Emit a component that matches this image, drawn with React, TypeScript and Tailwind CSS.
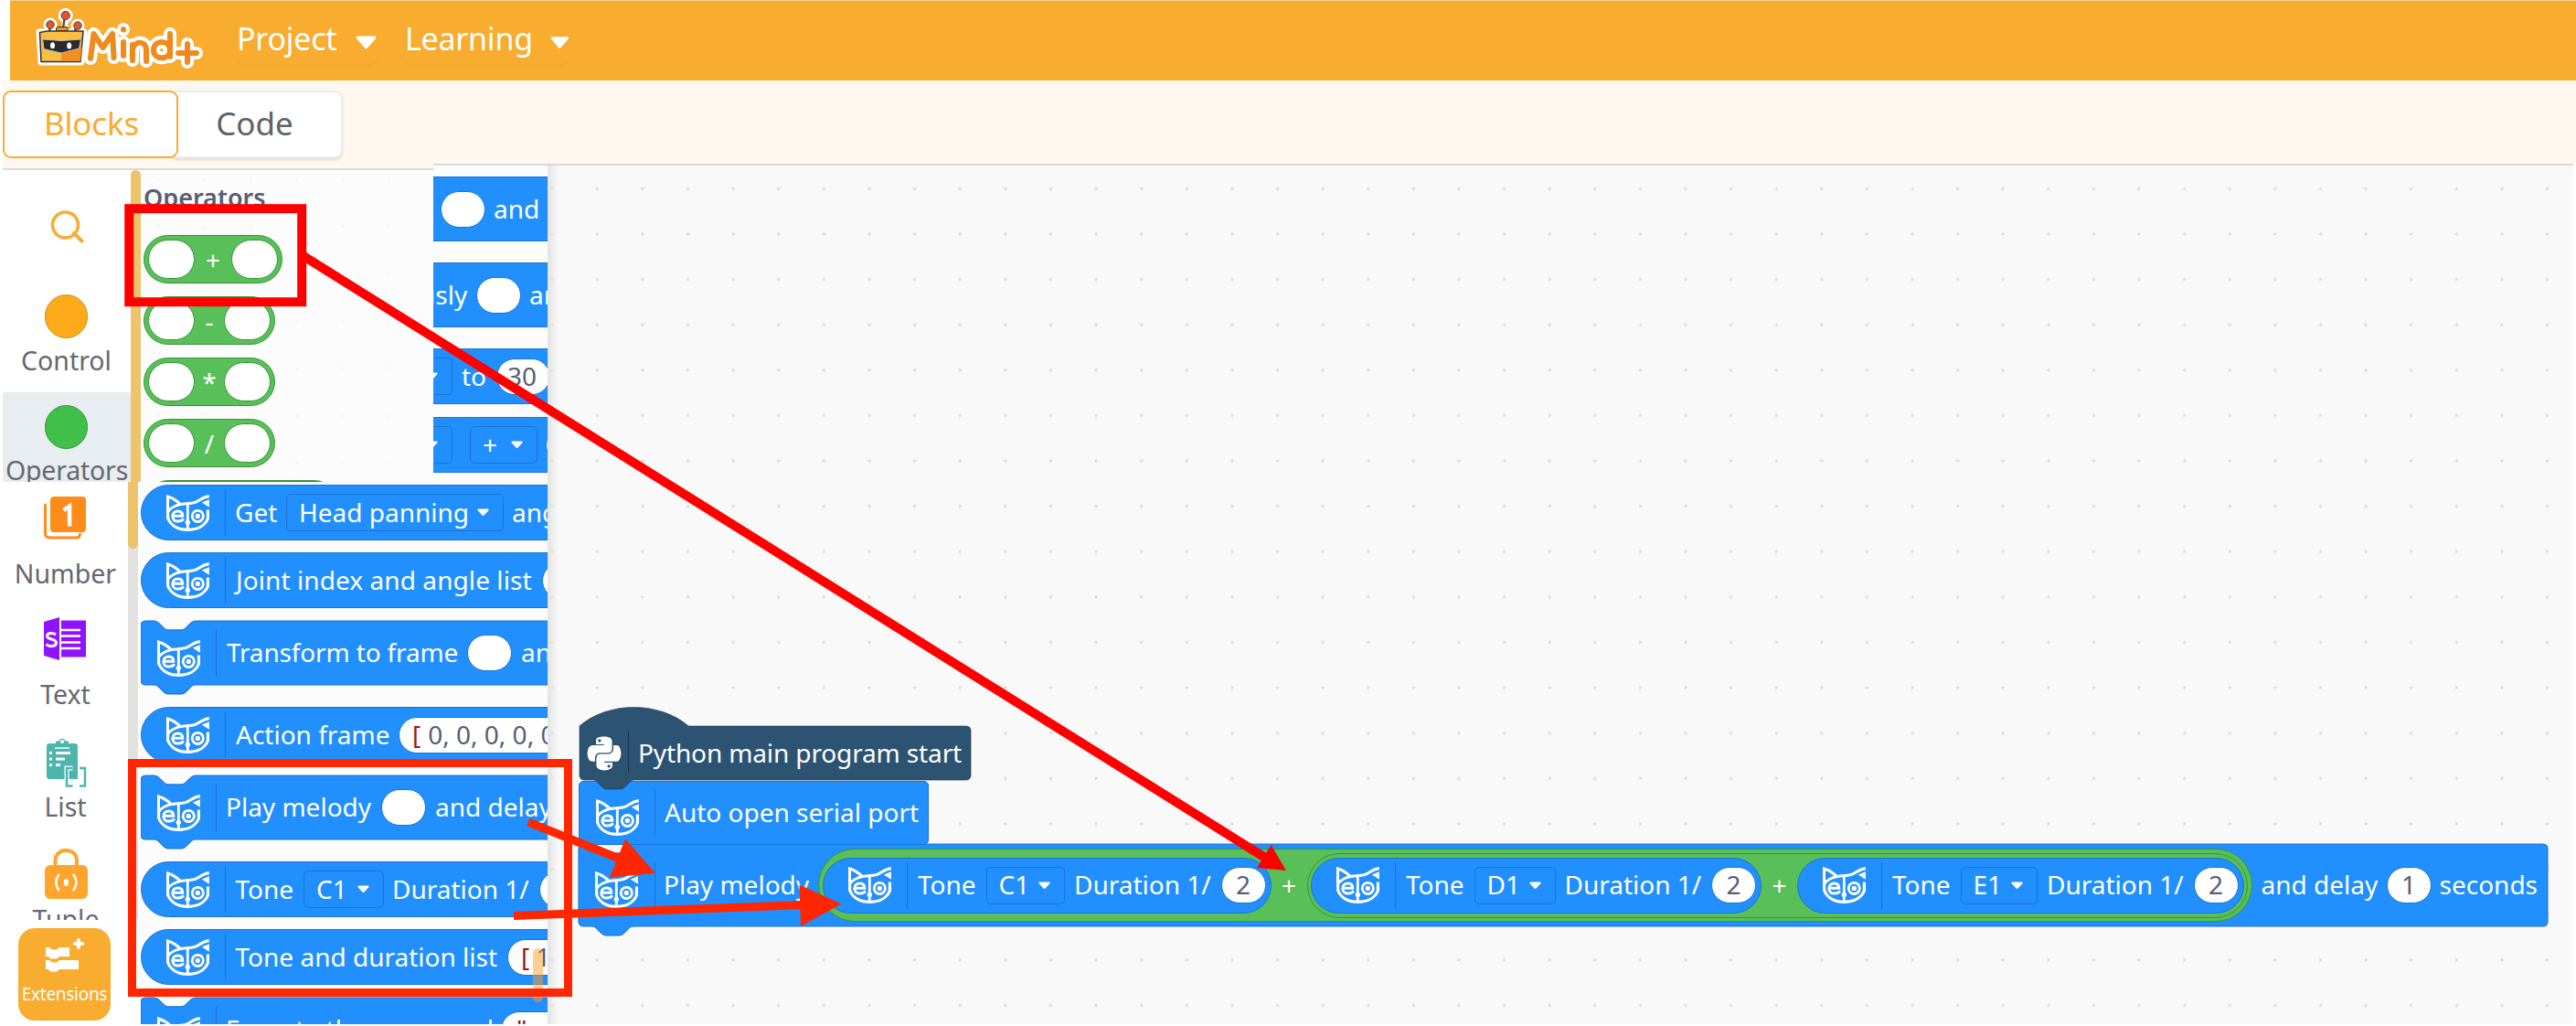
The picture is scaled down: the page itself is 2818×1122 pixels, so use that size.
import type { ReactNode } from "react";
import { FaPython } from "react-icons/fa";

const NOTCH = "c2,0 3,1 4,2 l4,4 c1,1 2,2 4,2 h12 c2,0 3,-1 4,-2 l4,-4 c1,-1 2,-2 4,-2";
const NOTCH_BACK = "c-2,0 -3,1 -4,2 l-4,4 c-1,1 -2,2 -4,2 h-12 c-2,0 -3,-1 -4,-2 l-4,-4 c-1,-1 -2,-2 -4,-2";
const UNIT = 1.24;

function StackShape({ w, h }: { w: number; h: number }) {
  const W = w / UNIT;
  const H = h / UNIT;
  const d = `M0,4 a4,4 0 0 1 4,-4 H12 ${NOTCH} H${W - 4} a4,4 0 0 1 4,4 V${H - 4} a4,4 0 0 1 -4,4 H48 ${NOTCH_BACK} H4 a4,4 0 0 1 -4,-4 z`;
  return (
    <svg className="absolute left-0 top-0 overflow-visible" width={w} height={h + 10}>
      <path d={d} transform={`scale(${UNIT})`} fill="#218ffe" stroke="#1b75cf" strokeWidth="0.9" />
    </svg>
  );
}

function HatShape() {
  const W = 428 / UNIT;
  const H = 59 / UNIT;
  const d = `M0,0 c25,-22 71,-22 96,0 H${W - 4} a4,4 0 0 1 4,4 V${H - 4} a4,4 0 0 1 -4,4 H48 ${NOTCH_BACK} H4 a4,4 0 0 1 -4,-4 z`;
  return (
    <svg className="absolute left-0 top-0 overflow-visible" width="428" height="70">
      <path d={d} transform={`scale(${UNIT})`} fill="#2d5373" stroke="#1f3a56" strokeOpacity="0.6" strokeWidth="0.9" />
    </svg>
  );
}

function Cat({ className = "" }: { className?: string }) {
  return (
    <svg className={`shrink-0 ${className}`} width="47" height="40" viewBox="0 0 47 40" fill="none" stroke="#fff">
      <path strokeWidth="3" strokeLinejoin="miter" d="M1.500 21V2C6.500 3.500 11 6 15.200 10.600C10 11.800 5 14 1.500 18.500" />
      <path strokeWidth="3.200" d="M14 10.600C20 9.500 26 9.900 31 8.500C36.500 6.800 39.500 2.200 46.800 1.600" />
      <path strokeWidth="3.200" d="M1.600 16V25.500C5 34.500 14 38.300 23.400 38.300C33 38.300 42 34.500 45.400 26V16.500" />
      <path strokeWidth="2.800" d="M23.300 9.500V38" />
      <path d="M38.800 8.400L46.900 5.200V13.800Z" fill="#fff" stroke="none" />
      <path strokeWidth="3" d="M8.500 23.300H17.800C17.800 19.600 15.500 18 12.700 18C9.400 18 6.800 20 6.800 23.400C6.800 27 9.200 29.100 12.700 29.100C15.500 29.100 17.800 28 18.800 26.300" />
      <circle cx="34.300" cy="23.400" r="6.100" strokeWidth="2.800" />
      <circle cx="34.300" cy="23.400" r="2.700" fill="#fff" stroke="none" />
      <circle cx="23.300" cy="30.500" r="2.700" fill="#fff" stroke="none" />
    </svg>
  );
}

function Caret() {
  return (
    <svg className="shrink-0" width="13" height="9" viewBox="0 0 13 9">
      <path d="M1.500 0.500H11.500C12.800 0.500 12.900 1.500 12.300 2.200L7.500 7.600C6.900 8.200 6.100 8.200 5.500 7.600L0.700 2.200C0.100 1.500 0.200 0.500 1.500 0.500Z" fill="#fff" />
    </svg>
  );
}

function T({ children, className = "" }: { children: ReactNode; className?: string }) {
  return <span className={`relative -top-px shrink-0 whitespace-pre ${className}`}>{children}</span>;
}

const Divider = ({ className }: { className: string }) => (
  <span className={`h-[51px] w-px shrink-0 bg-[#1b72c9] ${className}`} />
);

function Slot({ children, className = "w-[49px]" }: { children?: ReactNode; className?: string }) {
  return (
    <span className={`flex h-10 shrink-0 items-center rounded-full border border-[#1b75cf] bg-white text-[#575e75] ${className}`}>
      {children}
    </span>
  );
}

function Drop({ children, className }: { children: ReactNode; className: string }) {
  return (
    <span className={`flex h-[41px] shrink-0 items-center justify-between rounded-[5px] border border-[#1b75cf] pl-[13px] pr-[15px] ${className}`}>
      <T>{children}</T>
      <Caret />
    </span>
  );
}

/* Rounded value block. */
function Reporter({ children, className }: { children: ReactNode; className: string }) {
  return (
    <div className={`flex h-[61px] shrink-0 items-center rounded-full border border-[#1b75cf] bg-[#218ffe] pl-[27px] ${className}`}>
      <Cat />
      <Divider className="ml-[17px]" />
      {children}
    </div>
  );
}

/* Command block with connector notches. */
function Stack({ w, h = 70, children, className }: { w: number; h?: number; children: ReactNode; className: string }) {
  return (
    <div className={`absolute ${className}`}>
      <StackShape w={w} h={h} />
      <div className="relative flex h-full items-center">{children}</div>
    </div>
  );
}

function Tone({ note, width }: { note: string; width: string }) {
  return (
    <Reporter className="pr-[5px]">
      <T className="ml-[11px] w-[64px]">Tone</T>
      <Drop className={`ml-[10.500px] ${width}`}>{note}</Drop>
      <T className="ml-[10px] w-[150px]">Duration 1/</T>
      <Slot className="ml-[10.500px] w-[49px] justify-center"><T>2</T></Slot>
    </Reporter>
  );
}

function OpPill({ op, className }: { op: string; className: string }) {
  return (
    <div className={`absolute flex h-[53px] items-center justify-between rounded-full border border-[#389438] bg-[#59c059] px-[4px] text-white ${className}`}>
      <span className="h-[43px] w-[51px] rounded-full border border-[#389438] bg-white" />
      <span className="text-[28px]">{op}</span>
      <span className="h-[43px] w-[51px] rounded-full border border-[#389438] bg-white" />
    </div>
  );
}

const LETTERS = "M62 55L65.500 28L75.500 43L86 28L87.500 54M98 37V52M98 23V23.500M108 57V40M108 45C111 35 123 35 123 46V58M149 28V53M149 46C149 34 131 34 131 46C131 57 149 57 149 46M158 49H178M168 39V59";

function Logo() {
  return (
    <svg width="186" height="68" viewBox="0 0 186 68" className="shrink-0 overflow-visible">
      <g stroke="#fff" strokeWidth="7" strokeLinejoin="round" fill="#fff">
        <path d="M6 26H55L52 59H8Z" />
        <path d="M17 24V16M34 20V8M46 24V18" />
        <circle cx="18" cy="18" r="4" /><circle cx="34.700" cy="8" r="4.500" /><circle cx="48" cy="19" r="4" />
      </g>
      <path fill="none" stroke="#fff" strokeWidth="14" strokeLinecap="round" strokeLinejoin="round" d={LETTERS} />
      <path d="M18 18L17 26M34 8L32 22M48 19L44 26" fill="none" stroke="#555" strokeWidth="2.500" />
      <path d="M24.500 25V22Q25 20.500 27 20.500H35Q37 20.500 37 22V25Z" fill="#f18f21" stroke="#333" />
      <path d="M6.500 26.500L14 25H54L51 58.500H8Z" fill="#f9bf45" stroke="#333" strokeWidth="1.500" />
      <path d="M30.300 43H52.500L51 58H30.300Z" fill="#f18f21" />
      <circle cx="18" cy="18" r="4.300" fill="#e2572a" stroke="#333" strokeWidth="0.800" /><circle cx="34.700" cy="8" r="4.700" fill="#e2572a" stroke="#333" strokeWidth="0.800" /><circle cx="48" cy="19" r="4.300" fill="#e2572a" stroke="#333" strokeWidth="0.800" />
      <path d="M9.700 34L30 35.500L51.500 34L49.500 44L30 49L11 44.500Z" fill="#2b2b2b" stroke="#bbb" />
      <ellipse cx="20.500" cy="40.700" rx="2.500" ry="3.500" fill="#fff" /><ellipse cx="38.700" cy="41" rx="2.500" ry="3.500" fill="#fff" />
      <path fill="none" stroke="#f18a1c" strokeWidth="6" strokeLinecap="round" strokeLinejoin="round" d={LETTERS} />
    </svg>
  );
}

const MenuCaret = ({ className }: { className: string }) => (
  <svg className={className} width="23" height="15" viewBox="0 0 23 15"><path d="M2 0.500H21Q23 1 22 3L13 13.500Q11.500 15 10 13.500L1 3Q0 1 2 0.500Z" fill="#fff" /></svg>
);

function Header() {
  return (
    <header className="ml-[11px] flex h-[88px] border-t border-[#fbd596] bg-[#f8ac30] text-[34px] leading-[46px] tracking-[-0.25px] text-white">
      <div className="ml-[26px] mt-[8px]"><Logo /></div>
      <div className="ml-[36px] mt-[18px] flex h-[51px] w-[154px] rounded-lg shadow-[0_2px_2px_rgba(220,140,20,0.13)]">
        Project<MenuCaret className="ml-[21px] mt-[20px]" />
      </div>
      <div className="ml-[30px] mt-[18px] flex h-[51px] w-[180px] rounded-lg shadow-[0_2px_2px_rgba(220,140,20,0.13)]">
        Learning<MenuCaret className="ml-[19.500px] mt-[20px]" />
      </div>
    </header>
  );
}

function Tabs() {
  return (
    <div className="ml-[3px] flex h-[91px] items-start bg-[#fff8f1] pt-[11px] text-[35px] leading-none">
      <div className="z-10 flex h-[74px] w-[192px] items-center justify-center rounded-[9px] border-2 border-[#f8ac30] bg-white pb-[3px] pl-[2px] tracking-[-0.2px] text-[#f8ac30]">Blocks</div>
      <div className="-ml-[10px] flex h-[74px] w-[190px] items-center justify-center rounded-[9px] border-2 border-[#ececee] bg-white pb-[3px] pr-[3px] text-[#606266] shadow-[0_2px_3px_rgba(0,0,0,0.12)]">Code</div>
    </div>
  );
}

const sideLabel = "block text-center text-[28.500px] leading-[38px] text-[#66686d]";

function Sidebar() {
  return (
    <aside className="flex h-[941px] w-[154px] shrink-0 flex-col">
      <div className="ml-[3px] h-[7px] shrink-0 border-b-2 border-[#dcdad8] bg-[#fff8f1]" />
      <div className="flex h-[341px] shrink-0">
        <div className="flex w-[143px] flex-col">
          <svg className="ml-[54px] mt-[43px] shrink-0" width="40" height="40" viewBox="0 0 40 40" fill="none" stroke="#f8ac30" strokeWidth="3.500">
            <circle cx="17.500" cy="17" r="14" /><path d="M27 26L35.500 34.500" strokeLinecap="round" strokeWidth="4" />
          </svg>
          <span className="ml-[49px] mt-[53px] h-12 w-[47px] shrink-0 rounded-full border border-[#cf8b17] bg-[#ffab19]" />
          <span className={`mt-[5px] pl-[2px] ${sideLabel}`}>Control</span>
          <div className="ml-[3px] mt-[16px] h-[98px] shrink-0 overflow-hidden bg-[#e8edf1]">
            <span className="ml-[46px] mt-[14px] block h-12 w-[47px] rounded-full border border-[#389438] bg-[#40bf4a]" />
            <span className={`mt-[4px] tracking-[-0.200px] ${sideLabel}`}>Operators</span>
          </div>
        </div>
        <div className="w-[11px] rounded-t-full bg-[#edc36b]" />
      </div>
      <div className="flex h-[593px] shrink-0">
        <div className="flex w-[140px] flex-col pr-[1px]">
          <svg className="ml-[48px] mt-[16px] shrink-0" width="46" height="47" viewBox="0 0 46 47">
            <path d="M1.500 9V40Q1.500 45 6.500 45H35Q39.500 45 39.500 41" fill="none" stroke="#ff8c1a" strokeWidth="3" strokeLinecap="round" />
            <rect x="7" width="39" height="39" rx="4" fill="#ff8c1a" />
            <path d="M21.500 15L28 10.500V32.500" fill="none" stroke="#fff" strokeWidth="4.500" />
          </svg>
          <span className={`mt-[18px] pl-[4px] ${sideLabel}`}>Number</span>
          <svg className="ml-[48px] mt-[29px] shrink-0" width="46" height="47" viewBox="0 0 46 47">
            <path d="M0 5L17 0V47L0 42Z" fill="#9013fe" /><rect x="19" y="3.500" width="27" height="40" fill="#9013fe" />
            <path d="M18 14H40M18 20.500H40M18 27.500H40M18 34H40" stroke="#fff" strokeWidth="2.300" />
            <path d="M13 19C10 16.500 3.500 17 3.500 20.500C3.500 25 13.500 23 13.500 28C13.500 32 6 33 2.500 29.500" fill="none" stroke="#fff" strokeWidth="3" />
          </svg>
          <span className={`mt-[18px] pl-[4px] ${sideLabel}`}>Text</span>
          <svg className="ml-[51px] mt-[29px] shrink-0" width="44" height="54" viewBox="0 0 44 54">
            <path d="M3 6H10V3.500H13Q17 -2.500 21 3.500H24V6H31Q34 6 34 9V32H20V45H3Q0 45 0 42V9Q0 6 3 6Z" fill="#4db6ac" />
            <circle cx="17" cy="4" r="2" fill="#fff" />
            <path d="M9 11H25" stroke="#fff" strokeWidth="1.500" />
            <path d="M10 16.500H26M10 23H20M10 29.500H15M3 16.500H6M3 23H6M3 29.500H6" stroke="#fff" strokeWidth="2.800" />
            <rect x="19" y="31" width="15" height="14" fill="#4db6ac" />
            <path d="M28.500 33H22V52.500H28.500" fill="none" stroke="#fff" strokeWidth="5" />
            <path d="M28.500 33H22V52.500H28.500M36 33H42V52.500H36" fill="none" stroke="#4db6ac" strokeWidth="2.500" />
          </svg>
          <span className={`mt-[2px] pl-[4px] ${sideLabel}`}>List</span>
          <svg className="ml-[49px] mt-[27px] shrink-0" width="47" height="55" viewBox="0 0 47 55">
            <path d="M11.500 22V13.500C11.500 -2 35 -2 35 13.500V22" fill="none" stroke="#ffa52e" strokeWidth="4" />
            <rect y="18" width="47" height="37" rx="6" fill="#ffa52e" />
            <path d="M15.500 28Q9 37 15.500 46M31 28Q38 37 31 46" fill="none" stroke="#fff" strokeWidth="2.500" />
            <ellipse cx="23.300" cy="37" rx="2.600" ry="4" fill="#fff" />
          </svg>
          <div className="mt-[3px] h-[20px] shrink-0 overflow-hidden pl-[5px]"><span className={sideLabel}>Tuple</span></div>
          <div className="ml-[20px] mt-[9px] flex h-[101px] w-[101px] shrink-0 flex-col items-center rounded-[18px] bg-[#f8ac30]">
            <svg className="ml-[1px] mt-[11px]" width="42" height="37" viewBox="0 0 42 37" fill="#fff">
              <path d="M0 10H4L7 12.500H12L15 10H26V20H15L12 22.500H5L3 20H0Z" />
              <path d="M0 24H4L7 26.500H12L15 24H36V34H15L12 36.500H5L3 34H0Z" />
              <path d="M36 2V10M32 6H40" stroke="#fff" strokeWidth="4" strokeLinecap="round" />
            </svg>
            <span className="mt-[11px] text-[19px] leading-[26px] tracking-[-0.3px] text-white">Extensions</span>
          </div>
        </div>
        <div className="h-[477px] w-[11px] bg-[#e3e2e0]"><div className="h-[73px] rounded-b-full bg-[#edc36b]" /></div>
      </div>
    </aside>
  );
}

function Palette() {
  return (
    <section className="relative z-10 h-[941px] w-[445px] shrink-0 overflow-hidden bg-[#fcfcfc] text-white">
      {/* operators flyout */}
      <div className="absolute left-0 top-0 h-[348px] w-[320px] overflow-hidden bg-[#fcfcfc] [background-image:radial-gradient(circle,#f4f4f4_1.300px,transparent_1.900px)] [background-position:-6px_-8.500px] [background-size:50.400px_51.700px]">
        <div className="h-[7px] w-full border-b-2 border-[#dcdad8] bg-[#fff8f1]" />
        <h2 className="ml-[3px] mt-[12px] text-[27px] font-semibold leading-[36px] text-[#575e75]">Operators</h2>
        <OpPill op="+" className="left-[3px] top-[78px] w-[152px]" />
        <OpPill op="-" className="left-[3px] top-[145px] w-[144px]" />
        <OpPill op="*" className="left-[3px] top-[212px] w-[144px]" />
        <OpPill op="/" className="left-[3px] top-[279px] w-[144px]" />
        <div className="absolute left-[4px] top-[346px] h-[53px] w-[212px] rounded-full border-2 border-[#389438] bg-[#59c059]" />
      </div>

      {/* blocks showing to the right of the flyout */}
      <div className="absolute left-[320px] top-0 h-[348px] w-[125px] overflow-hidden border-t-2 border-[#dcdad8] bg-[#fcfcfc]">
        <div className="absolute left-0 top-[12px] flex h-[71px] w-[130px] items-center border-y border-[#1b75cf] bg-[#218ffe] pl-[8px]">
          <Slot /><T className="ml-[9px]">and</T>
        </div>
        <div className="absolute left-0 top-[106px] flex h-[71px] w-[130px] items-center border-y border-[#1b75cf] bg-[#218ffe]">
          <T className="-ml-[15px] w-[52px]">usly</T><Slot className="ml-[10px] w-[49px]" /><T className="ml-[9px]">and</T>
        </div>
        <div className="absolute left-0 top-[200px] flex h-[61px] w-[190px] items-center border-y border-[#1b75cf] bg-[#218ffe]">
          <Drop className="-ml-[50px] w-[71px]"> </Drop>
          <T className="ml-[10px] w-[28px]">to</T>
          <Slot className="ml-[10px] w-[59px] pl-[11px]"><T>30</T></Slot>
        </div>
        <div className="absolute left-0 top-[275px] flex h-[61px] w-[190px] items-center border-y border-[#1b75cf] bg-[#218ffe]">
          <Drop className="-ml-[50px] w-[71px]"> </Drop>
          <Drop className="ml-[19px] w-[74px]">+</Drop>
          <Slot className="ml-[9px] w-[59px]" />
        </div>
      </div>

      <Reporter className="absolute left-0 top-[351px] w-[600px]">
        <T className="ml-[10px] w-[46px]">Get</T>
        <Drop className="ml-[10px] w-[238px]">Head panning</Drop>
        <T className="ml-[9px]">angle</T>
      </Reporter>
      <Reporter className="absolute left-0 top-[425px] w-[600px]">
        <T className="ml-[11px] w-[324px] tracking-[0.080px]">Joint index and angle list</T>
        <Slot className="ml-[11px] w-[120px]" />
      </Reporter>
      <Stack w={620} className="left-0 top-[500px] h-[70px]">
        <Cat className="relative top-[6px] ml-[18px]" /><Divider className="ml-[17px]" />
        <T className="ml-[11px] w-[253px] tracking-[-0.150px]">Transform to frame</T>
        <Slot className="ml-[10px] w-[49px]" /><T className="ml-[10px]">and</T>
      </Stack>
      <Reporter className="absolute left-0 top-[594px] w-[600px]">
        <T className="ml-[11px] w-[167px]">Action frame</T>
        <Slot className="ml-[11px] w-[300px] pl-[14px]"><T className="text-[#a31515]">[</T><T className="ml-[8px]">0, 0, 0, 0, 0, 0</T></Slot>
      </Reporter>
      <Stack w={620} className="left-0 top-[669px] h-[70px]">
        <Cat className="relative top-[6px] ml-[18px]" /><Divider className="ml-[17px]" />
        <T className="ml-[10px] w-[160px]">Play melody</T>
        <Slot className="ml-[10px] w-[49px]" /><T className="ml-[10px]">and delay</T>
      </Stack>
      <Reporter className="absolute left-0 top-[763px] w-[600px]">
        <T className="ml-[10.500px] w-[64.500px]">Tone</T>
        <Drop className="ml-[10px] w-[88px]">C1</Drop>
        <T className="ml-[9px] w-[150px]">Duration 1/</T>
        <Slot className="ml-[11px] w-[80px]" />
      </Reporter>
      <Reporter className="absolute left-0 top-[837px] w-[600px]">
        <T className="ml-[10.500px] w-[287.500px]">Tone and duration list</T>
        <Slot className="ml-[10px] w-[300px] pl-[14px]"><T className="text-[#a31515]">[</T><T className="ml-[7px]">1, 2</T></Slot>
      </Reporter>
      <Stack w={620} className="left-0 top-[912px] h-[70px]">
        <Cat className="relative top-[6px] ml-[18px]" /><Divider className="ml-[17px]" />
        <T className="ml-[10px] w-[291px]">Execute the command</T>
        <Slot className="ml-[10px] w-[300px] pl-[16px]"><T className="text-[#a31515]">"</T></Slot>
      </Stack>
      <div className="absolute left-[429px] top-[858px] h-[59px] w-[11px] rounded-full bg-[#ff9f30]/50" />
    </section>
  );
}

function Workspace() {
  return (
    <main className="relative h-[941px] w-[2216px] border-t-2 border-[#dcdad8] bg-[#f9f9f9] [background-image:radial-gradient(circle,#dadada_1.300px,transparent_1.900px)] [background-position:-20.100px_0.600px] [background-size:49.620px_49.620px] text-white">
      <div className="absolute left-0 top-0 h-full w-[12px] bg-gradient-to-r from-[#e2e4e3] to-transparent" />
      <Stack w={2154} h={90} className="left-[34px] top-[742px] h-[90px]">
        <Cat className="relative top-[5px] ml-[18px]" /><Divider className="ml-[17.500px]" />
        <T className="ml-[9.500px] w-[161px]">Play melody</T>
        <div className="ml-[8px] flex h-[80px] items-center rounded-full border border-[#389438] bg-[#59c059] px-[4px]">
          <Tone note="C1" width="w-[86.500px]" />
          <span className="w-[39px] text-center text-[28px]">+</span>
          <div className="flex h-[71px] items-center rounded-full border border-[#389438] px-[3.500px]">
            <Tone note="D1" width="w-[89px]" />
            <span className="w-[39px] text-center text-[28px]">+</span>
            <Tone note="E1" width="w-[84.500px]" />
          </div>
        </div>
        <T className="ml-[9.500px] w-[127px]">and delay</T>
        <Slot className="ml-[10px] w-[49px] justify-center"><T>1</T></Slot>
        <T className="ml-[9px]">seconds</T>
      </Stack>
      <div className="absolute left-[34px] top-[673px] flex h-[70px] w-[383px] items-center rounded-[5px] border border-[#1b75cf] bg-[#218ffe]">
        <Cat className="relative top-[5px] ml-[17.500px]" /><Divider className="ml-[17px]" />
        <T className="ml-[10.500px]">Auto open serial port</T>
      </div>
      <div className="absolute left-[35px] top-[613px] h-[59px] w-[428px]">
        <HatShape />
        <div className="relative flex h-full items-center">
          <FaPython className="ml-[7px] h-[42px] w-[40px]" />
          <span className="relative -top-[2px] ml-[6px] h-[46px] w-px bg-[#17314d]" />
          <T className="ml-[10px] tracking-[-0.130px]">Python main program start</T>
        </div>
      </div>
    </main>
  );
}

/* Red call-outs linking palette blocks to the program. */
function Annotations() {
  return (
    <svg className="pointer-events-none absolute left-0 top-0 z-20" width="2818" height="1122" fill="none">
      <rect x="141.200" y="228.200" width="189" height="102" stroke="#f00" strokeWidth="10" />
      <path d="M332 280L1384 938" stroke="#f00" strokeWidth="10" />
      <path d="M1407 952L1390.500 924L1375 949Z" fill="#f00" />
      <rect x="144.500" y="834.500" width="477" height="251" stroke="#ff2600" strokeWidth="9" />
      <path d="M578 899L680 940M562 1001.500L880 989.500" stroke="#ff2600" strokeWidth="9" />
      <path d="M717 955L684 917.500L667 959.500ZM920.500 988.500L874.500 967.500L876 1013Z" fill="#ff2600" />
    </svg>
  );
}

export default function App() {
  return (
    <div className="relative h-[1122px] w-[2818px] overflow-hidden bg-white font-['Noto_Sans','Open_Sans',sans-serif] text-[28px] leading-none">
      <Header />
      <Tabs />
      <div className="flex">
        <Sidebar />
        <Palette />
        <Workspace />
      </div>
      <Annotations />
    </div>
  );
}
